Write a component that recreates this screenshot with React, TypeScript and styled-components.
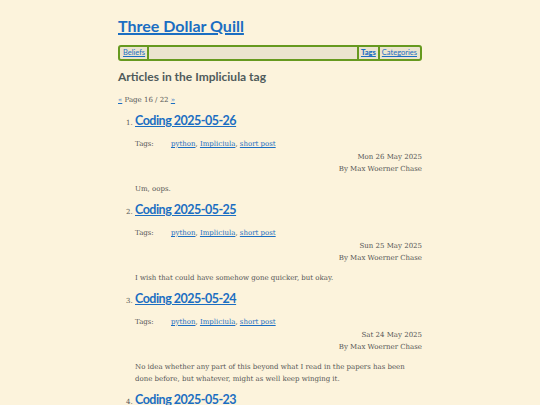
import styled, { createGlobalStyle } from "styled-components";

const GlobalStyle = createGlobalStyle`
  body {
    margin: 0;
    background: #fcf3dc;
    color: #555;
    font-family: "DejaVu Serif", "Liberation Serif", serif;
  }
`;

const headFont = `Lato, "Open Sans", sans-serif`;
const linkBlue = "#1b6ec2";
const green = "#66991f";

type Article = {
  title: string;
  date: string;
  body: string;
};

const articles: Article[] = [
  { title: "Coding 2025-05-26", date: "Mon 26 May 2025", body: "Um, oops." },
  {
    title: "Coding 2025-05-25",
    date: "Sun 25 May 2025",
    body: "I wish that could have somehow gone quicker, but okay.",
  },
  {
    title: "Coding 2025-05-24",
    date: "Sat 24 May 2025",
    body: "No idea whether any part of this beyond what I read in the papers has been done before, but whatever, might as well keep winging it.",
  },
  { title: "Coding 2025-05-23", date: "Fri 23 May 2025", body: "" },
];

const Page = styled.div`
  width: 304px;
  margin: 0 auto;
  padding-top: 15px;
`;

const SiteTitle = styled.a`
  display: block;
  font-family: ${headFont};
  font-size: 16px;
  font-weight: 700;
  color: ${linkBlue};
  text-decoration: underline;
  text-decoration-thickness: 2px;
  line-height: 22px;
`;

const Nav = styled.nav`
  display: flex;
  align-items: stretch;
  margin-top: 8px;
  border: 2px solid ${green};
  border-radius: 3px;
  background: #ebe4cf;
  height: 12px;
  font-family: ${headFont};
  font-size: 7.5px;
  line-height: 12px;
  padding: 0 1px;
`;

const NavItem = styled.a<{ $active?: boolean; $left?: boolean; $right?: boolean }>`
  color: ${linkBlue};
  font-weight: ${({ $active }) => ($active ? 900 : 400)};
  text-decoration: underline;
  padding: 0 2px;
  border-left: ${({ $left }) => ($left ? `2px solid ${green}` : "none")};
  border-right: ${({ $right }) => ($right ? `2px solid ${green}` : "none")};
`;

const NavSpacer = styled.div`
  flex: 1;
`;

const Heading = styled.h1`
  margin: 7px 0 0;
  font-family: ${headFont};
  font-size: 12px;
  font-weight: 700;
  color: #4f5b5b;
  line-height: 18px;
`;

const Pager = styled.div`
  margin-top: 9px;
  font-size: 7px;
  line-height: 10px;
  color: #555;
`;

const PagerLink = styled.a`
  color: ${linkBlue};
  text-decoration: underline;
`;

const List = styled.ol`
  margin: 5px 0 0;
  padding-left: 17px;

  li::marker {
    font-size: 7px;
    color: #555;
  }
`;

const Item = styled.li`
  margin-bottom: 4px;
`;

const ItemTitle = styled.a`
  font-family: ${headFont};
  font-size: 12.5px;
  font-weight: 700;
  letter-spacing: -0.5px;
  color: ${linkBlue};
  text-decoration: underline;
  line-height: 18px;
`;

const TagRow = styled.div`
  display: flex;
  margin-top: 8px;
  font-size: 7px;
  line-height: 12px;
`;

const TagLabel = styled.span`
  width: 36px;
  color: #555;
`;

const TagLink = styled.a`
  color: ${linkBlue};
  text-decoration: underline;
`;

const Meta = styled.div<{ $first?: boolean }>`
  margin-top: ${({ $first }) => ($first ? "1px" : "0")};
  text-align: right;
  font-size: 7px;
  line-height: 12px;
  color: #555;
`;

const Body = styled.p`
  margin: 8px 0 0;
  font-size: 7px;
  line-height: 12px;
  color: #555;
`;

const tags = ["python", "Impliciula", "short post"];

export default function App() {
  return (
    <>
      <GlobalStyle />
      <Page>
        <SiteTitle href="#">Three Dollar Quill</SiteTitle>
        <Nav>
          <NavItem href="#" $right>
            Beliefs
          </NavItem>
          <NavSpacer />
          <NavItem href="#" $active $left $right>
            Tags
          </NavItem>
          <NavItem href="#">Categories</NavItem>
        </Nav>
        <Heading>Articles in the Impliciula tag</Heading>
        <Pager>
          <PagerLink href="#">«</PagerLink> Page 16 / 22{" "}
          <PagerLink href="#">»</PagerLink>
        </Pager>
        <List>
          {articles.map((a) => (
            <Item key={a.title}>
              <ItemTitle href="#">{a.title}</ItemTitle>
              <TagRow>
                <TagLabel>Tags:</TagLabel>
                <span>
                  {tags.map((t, i) => (
                    <span key={t}>
                      <TagLink href="#">{t}</TagLink>
                      {i < tags.length - 1 ? ", " : ""}
                    </span>
                  ))}
                </span>
              </TagRow>
              <Meta $first>{a.date}</Meta>
              <Meta>By Max Woerner Chase</Meta>
              {a.body && <Body>{a.body}</Body>}
            </Item>
          ))}
        </List>
      </Page>
    </>
  );
}
